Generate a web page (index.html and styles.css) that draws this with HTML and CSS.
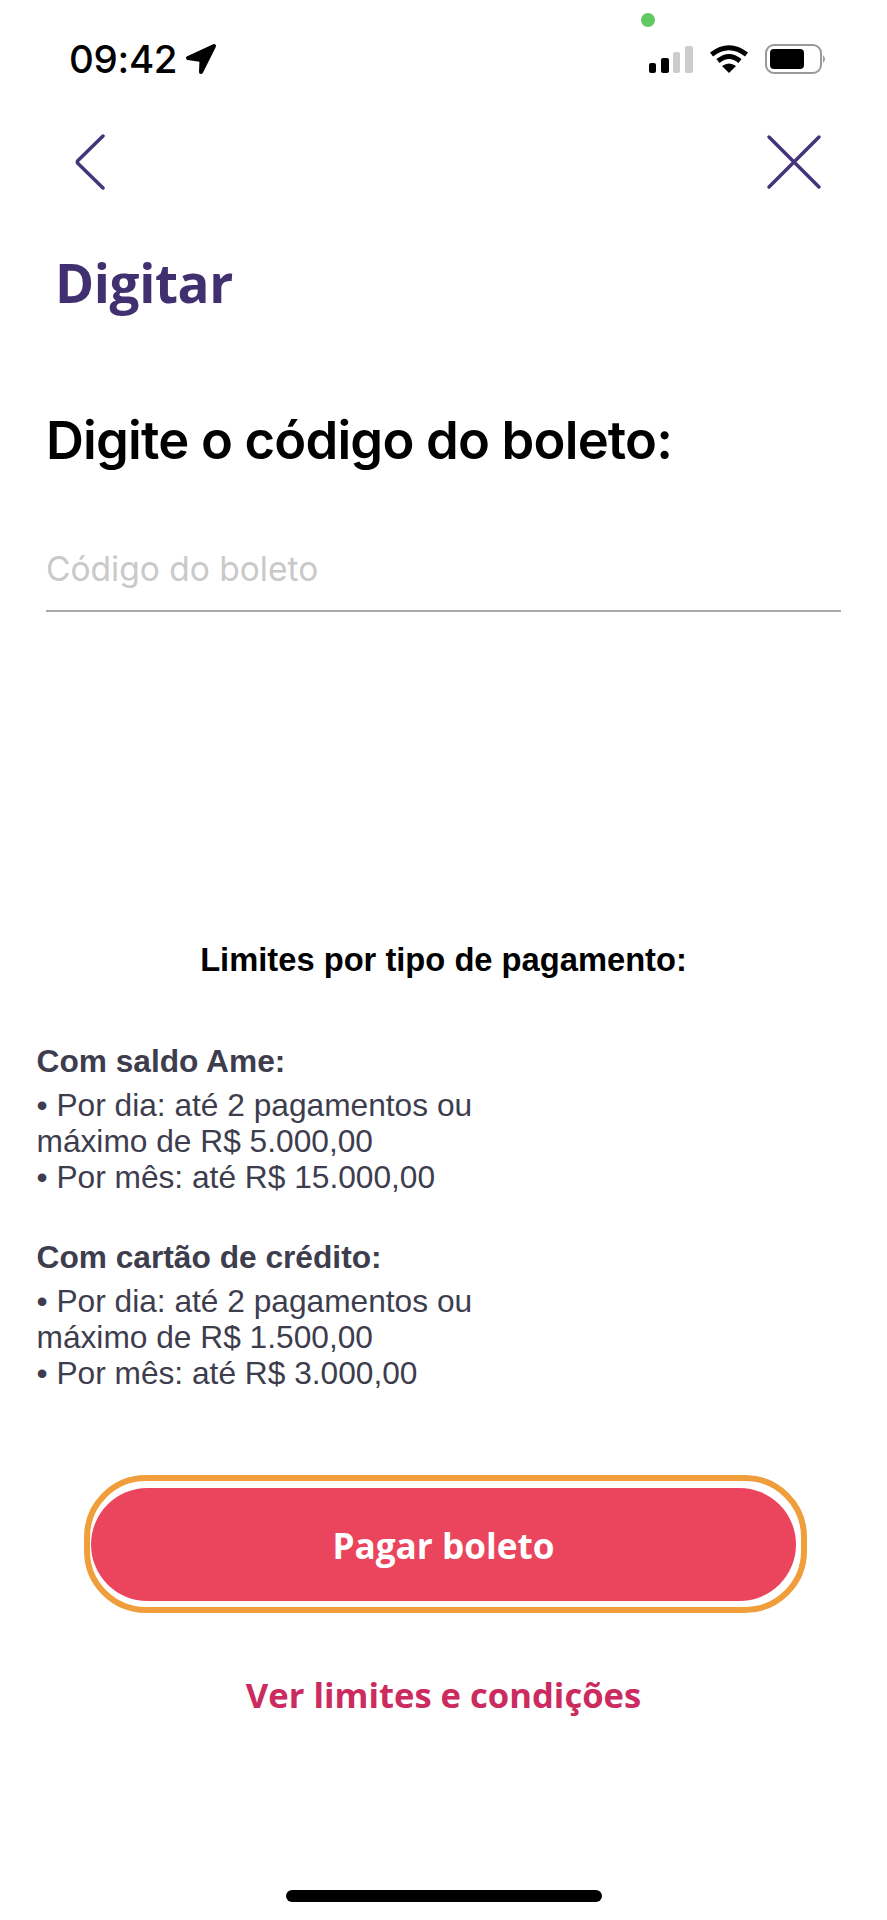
FILE: index.html
```html
<!DOCTYPE html>
<html lang="pt-BR">
<head>
<meta charset="utf-8">
<title>Digitar</title>
<link rel="stylesheet" href="styles.css">
</head>
<body>
<div class="screen">
  <span class="camera-dot"></span>
  <header class="status">
    <div class="status-left">
      <span class="time">09:42</span>
      <svg class="loc" width="32" height="32" viewBox="0 0 32 32"><path d="M29 3 L3 15 L16.500 17 L16 29 Z" fill="#000" stroke="#000" stroke-width="4" stroke-linejoin="round"/></svg>
    </div>
    <div class="status-right">
      <svg width="44" height="27" viewBox="0 0 44 27"><rect x="0" y="17" width="7" height="10" rx="2" fill="#000"/><rect x="12" y="12" width="8" height="15" rx="2" fill="#000"/><rect x="24" y="6" width="7" height="21" rx="2" fill="#ccc"/><rect x="36" y="0" width="8" height="27" rx="2" fill="#ccc"/></svg>
      <svg class="wifi" width="38" height="28" viewBox="0 0 38 28"><path d="M1.500 9.500 Q19 -4 36.500 9.500" fill="none" stroke="#000" stroke-width="5"/><path d="M8 16 Q19 7 30 16" fill="none" stroke="#000" stroke-width="5"/><path d="M12 21 Q19 16 26 21 L19 28 Z" fill="#000"/></svg>
      <svg class="batt" width="62" height="30" viewBox="0 0 62 30"><rect x="1" y="1" width="55" height="28" rx="8" fill="none" stroke="#999" stroke-width="2"/><rect x="5" y="5" width="34" height="20" rx="4" fill="#000"/><path d="M58 11 Q62 15 58 19 Z" fill="#999"/></svg>
    </div>
  </header>
  <nav class="nav">
    <svg width="32" height="56" viewBox="0 0 32 56"><path d="M29 2 L4 26.500 Q2.500 28 4 29.500 L29 54" fill="none" stroke="#44357a" stroke-width="3.500" stroke-linecap="round"/></svg>
    <svg width="56" height="56" viewBox="0 0 56 56"><path d="M3 3 L53 53 M53 3 L3 53" fill="none" stroke="#44357a" stroke-width="3.500" stroke-linecap="round"/></svg>
  </nav>
  <h1 class="title">Digitar</h1>
  <h2 class="prompt">Digite o código do boleto:</h2>
  <div class="field">Código do boleto</div>
  <h3 class="limits-title">Limites por tipo de pagamento:</h3>
  <section class="limit">
    <h4>Com saldo Ame:</h4>
    <p>• Por dia: até 2 pagamentos ou<br>máximo de R$ 5.000,00<br>• Por mês: até R$ 15.000,00</p>
  </section>
  <section class="limit">
    <h4>Com cartão de crédito:</h4>
    <p>• Por dia: até 2 pagamentos ou<br>máximo de R$ 1.500,00<br>• Por mês: até R$ 3.000,00</p>
  </section>
  <div class="btn-ring"><button class="btn">Pagar boleto</button></div>
  <a class="link">Ver limites e condições</a>
  <div class="home"></div>
</div>
</body>
</html>
```
FILE: styles.css
```css
* { box-sizing: border-box; }
html, body { margin: 0; padding: 0; background: #fff; }
.screen { position: relative; width: 887px; height: 1920px; display: flex; flex-direction: column; font-family: "Liberation Sans", sans-serif; color: #000; overflow: hidden; }
.camera-dot { position: absolute; left: 641px; top: 13px; width: 14px; height: 14px; border-radius: 50%; background: #62c965; }
.status { display: flex; justify-content: space-between; align-items: center; height: 30px; margin-top: 44px; padding: 0 60px 0 69px; }
.status-left { display: flex; align-items: center; gap: 8px; }
.time { font-family: Inter, sans-serif; font-size: 38.5px; font-weight: 500; line-height: 30px; letter-spacing: -0.3px; }
.status-right { display: flex; align-items: center; }
.wifi { margin-left: 17px; }
.batt { margin-left: 17px; }
.nav { display: flex; justify-content: space-between; margin-top: 60px; padding: 0 65px 0 74px; }
.title { margin: 59px 0 0 55px; font-family: "Open Sans", sans-serif; font-size: 53px; line-height: 68px; font-weight: 700; color: #41306f; letter-spacing: -0.4px; }
.prompt { margin: 93px 0 0 46px; font-family: Inter, sans-serif; font-size: 52.500px; line-height: 60px; font-weight: 600; letter-spacing: -0.8px; white-space: nowrap; }
.field { margin: 78px 46px 0; height: 64px; border-bottom: 2px solid #aaa; color: #c9c9c9; font-family: Inter, sans-serif; font-size: 33.500px; line-height: 43px; }
.limits-title { margin: 330px 0 0; text-align: center; font-size: 32.700px; line-height: 36px; font-weight: 700; }
.limit { margin: 65px 0 0 36.500px; color: #3d3d4e; font-size: 31.700px; line-height: 36px; }
.limit + .limit { margin-top: 44px; }
.limit h4 { margin: 0 0 8px; font-size: 31.700px; line-height: 36px; font-weight: 700; }
.limit p { margin: 0; }
.btn-ring { margin: 84px 0 0 84px; width: 723px; height: 138px; padding: 7px 5px 6px 1px; border: 6px solid #f09e3c; border-radius: 62px; }
.btn { display: block; width: 100%; height: 100%; border: 0; border-radius: 57px; background: #ea455c; color: #fff; font-family: "Open Sans", sans-serif; font-size: 35.200px; font-weight: 700; }
.link { margin-top: 57px; text-align: center; font-family: "Open Sans", sans-serif; font-size: 34.600px; line-height: 50px; font-weight: 700; color: #cb2b5e; }
.home { position: absolute; left: 286px; top: 1890px; width: 316px; height: 12px; border-radius: 6px; background: #000; }
```
